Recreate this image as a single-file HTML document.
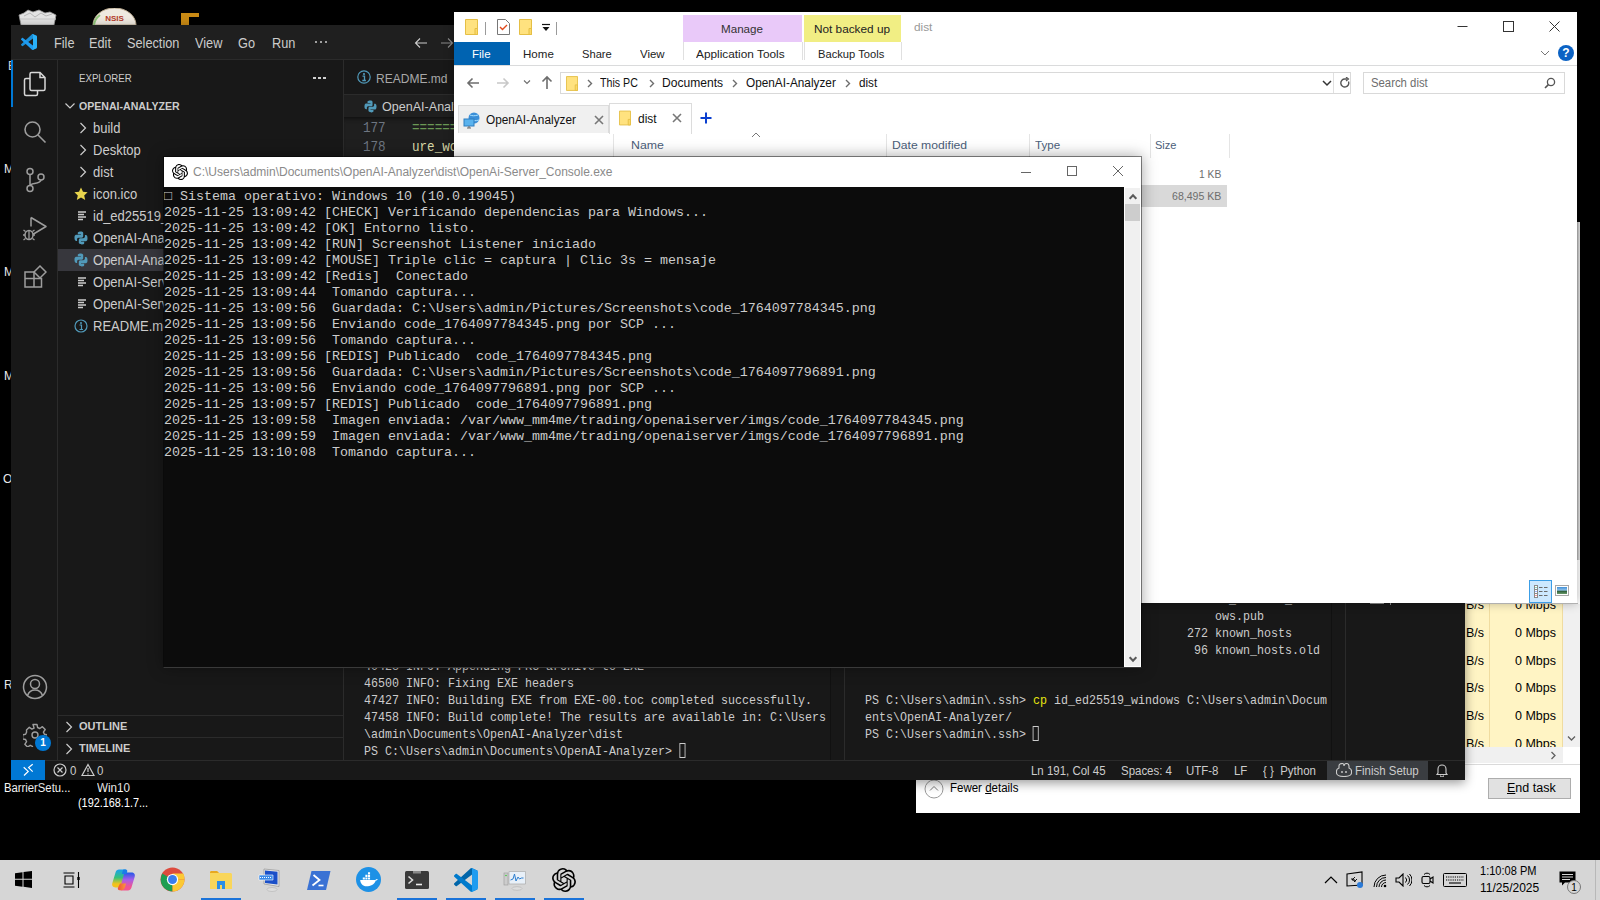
<!DOCTYPE html>
<html><head><meta charset="utf-8">
<style>
*{margin:0;padding:0;box-sizing:border-box}
html,body{width:1600px;height:900px;overflow:hidden;background:#000;font-family:"Liberation Sans",sans-serif}
.a{position:absolute}
.mono{font-family:"Liberation Mono",monospace}
.nw{white-space:nowrap}
/* VS Code */
#vs{left:11px;top:25px;width:1454px;height:755px;background:#181818;overflow:hidden;box-shadow:0 3px 10px rgba(0,0,0,.4)}
#vs .title{left:0;top:0;width:1454px;height:35px;background:#1f1f1f;border-bottom:1px solid #2b2b2b}
.menu{top:10px;font-size:14px;color:#cccccc;transform:scaleX(.91);transform-origin:0 0}
#vs .act{left:0;top:35px;width:47px;height:700px;background:#181818;border-right:1px solid #2b2b2b}
#vs .side{left:47px;top:35px;width:286px;height:700px;background:#181818;border-right:1px solid #2b2b2b}
.tree{font-size:14px;color:#cccccc;white-space:nowrap;transform:scaleX(.93);transform-origin:0 0}
#vs .status{left:0;top:735px;width:1454px;height:20px;background:#181818;border-top:1px solid #2b2b2b}
/* console */
#con{left:163px;top:156px;width:979px;height:512px;background:#fff;background-clip:padding-box;border:1px solid rgba(0,0,0,.45);border-bottom-color:#3a3a3a;box-shadow:0 0 14px rgba(0,0,0,.35)}
#con .body{left:0;top:30px;width:960px;height:480px;background:#0c0c0c;overflow:hidden}
#con pre{font-family:"Liberation Mono",monospace;font-size:13.33px;line-height:16px;color:#cccccc;position:absolute;left:0;top:2px;letter-spacing:0px}
/* explorer */
#ex{left:454px;top:12px;width:1123px;height:591px;background:#fff;box-shadow:0 0 10px rgba(0,0,0,.3)}
.seg{font-size:12.5px;color:#1e1e1e}
/* taskbar */
#tb{left:0;top:860px;width:1600px;height:40px;background:#d6d6d6}

.tmono{font-family:"Liberation Mono",monospace;font-size:13.5px;line-height:17px;color:#cccccc;transform:scaleX(.8642);transform-origin:0 0}
.cur{display:inline-block;width:7px;height:15px;border:1px solid #cccccc;vertical-align:-3px}
.sb{top:739px;font-size:12px;color:#cccccc;transform:scaleX(.955);transform-origin:0 0}
</style></head><body>

<!-- desktop icon fragments -->
<svg class="a" style="left:18px;top:8px" width="40" height="17" viewBox="0 0 40 17"><path d="M1 7l5-2 4-3 5 2 6-2 6 3 5-1 6 3-2 10H3z" fill="#e2e2e2" stroke="#9a9a9a" stroke-width=".8"/><path d="M6 8l6-3 5 4 6-4 5 3 6-2" stroke="#b5b5b5" stroke-width="1" fill="none"/><path d="M2 11h36" stroke="#c8c8c8" stroke-width="1"/></svg>
<svg class="a" style="left:92px;top:8px" width="45" height="17" viewBox="0 0 45 17"><path d="M1 17A21.5 17 0 0 1 44 17z" fill="#efe9e0" stroke="#b9a98f" stroke-width="1"/><path d="M2 17a21 16 0 0 1 6-10" stroke="#8fc47a" stroke-width="2" fill="none"/><text x="22.5" y="13" font-family="Liberation Sans" font-weight="bold" font-size="8" fill="#b33a2a" text-anchor="middle">NSIS</text></svg>
<svg class="a" style="left:181px;top:13px" width="19" height="12" viewBox="0 0 19 12"><path d="M0 0h18v4H8v8H0z" fill="#c98a14"/></svg>



<!-- task manager (behind VS Code) -->
<div class="a" style="left:1465px;top:603px;width:113px;height:1px;background:#b0b0b0;z-index:1"></div>
<div class="a" style="left:1577px;top:222px;width:3px;height:382px;background:linear-gradient(90deg,#a8a8a8,#d8d8d8 60%,#e8e8e8)"></div>

<div class="a" style="left:916px;top:560px;width:664px;height:253px;background:#fff">
  <div class="a" style="left:549px;top:44px;width:98px;height:143px;background:#fff4c4"></div>
  <div class="a" style="left:573px;top:44px;width:1px;height:143px;background:#f0dca0"></div>
  <div class="a" style="left:646px;top:44px;width:1px;height:143px;background:#f0dca0"></div>
  <div class="a" style="left:647px;top:44px;width:17px;height:143px;background:#f0f0f0"></div>
  <svg class="a" style="left:651px;top:175px" width="9" height="7" viewBox="0 0 9 7"><path d="M1 1.5l3.5 3.5L8 1.5" stroke="#606060" stroke-width="1.3" fill="none"/></svg>
  <div class="a" style="left:0;top:187px;width:647px;height:16px;background:#f0f0f0"></div>
  <svg class="a" style="left:634px;top:191px" width="7" height="9" viewBox="0 0 7 9"><path d="M1.5 1l3.5 3.5L1.5 8" stroke="#606060" stroke-width="1.3" fill="none"/></svg>
  <div class="a" style="left:0;top:204px;width:664px;height:1px;background:#dadada"></div>
  <div class="a" style="left:572px;top:218px;width:83px;height:21px;background:#e1e1e1;border:1px solid #adadad"></div>
  <div class="a nw" style="left:591px;top:221px;font-size:12.5px;color:#000"><u>E</u>nd task</div>
  <svg class="a" style="left:8px;top:219px" width="20" height="20" viewBox="0 0 20 20"><circle cx="10" cy="10" r="9" stroke="#9a9a9a" stroke-width="1" fill="none"/><path d="M6 11.5l4-4 4 4" stroke="#7a7a7a" stroke-width="1" fill="none"/></svg>
  <div class="a nw" style="left:34px;top:221px;font-size:12.5px;color:#000;transform:scaleX(.92);transform-origin:0 0">Fewer <u>d</u>etails</div>
<div class="a" style="left:549px;top:44px;width:98px;height:143px;overflow:hidden">
<div class="a nw" style="left:1px;top:-6.0px;font-size:12.5px;color:#000">B/s</div>
<div class="a nw" style="left:40px;top:-6.0px;width:51px;text-align:right;font-size:12.5px;color:#000">0 Mbps</div>
<div class="a nw" style="left:1px;top:21.8px;font-size:12.5px;color:#000">B/s</div>
<div class="a nw" style="left:40px;top:21.8px;width:51px;text-align:right;font-size:12.5px;color:#000">0 Mbps</div>
<div class="a nw" style="left:1px;top:49.5px;font-size:12.5px;color:#000">B/s</div>
<div class="a nw" style="left:40px;top:49.5px;width:51px;text-align:right;font-size:12.5px;color:#000">0 Mbps</div>
<div class="a nw" style="left:1px;top:77.2px;font-size:12.5px;color:#000">B/s</div>
<div class="a nw" style="left:40px;top:77.2px;width:51px;text-align:right;font-size:12.5px;color:#000">0 Mbps</div>
<div class="a nw" style="left:1px;top:105.0px;font-size:12.5px;color:#000">B/s</div>
<div class="a nw" style="left:40px;top:105.0px;width:51px;text-align:right;font-size:12.5px;color:#000">0 Mbps</div>
<div class="a nw" style="left:1px;top:132.8px;font-size:12.5px;color:#000">B/s</div>
<div class="a nw" style="left:40px;top:132.8px;width:51px;text-align:right;font-size:12.5px;color:#000">0 Mbps</div>
</div>
</div>

<div class="a nw" style="left:8px;top:59px;font-size:12px;color:#fff">E</div>
<div class="a nw" style="left:4px;top:162px;font-size:12px;color:#fff">M</div>
<div class="a nw" style="left:4px;top:265px;font-size:12px;color:#fff">M</div>
<div class="a nw" style="left:4px;top:369px;font-size:12px;color:#fff">M</div>
<div class="a nw" style="left:3px;top:472px;font-size:12px;color:#fff">O</div>
<div class="a nw" style="left:4px;top:678px;font-size:12px;color:#fff">R</div>
<div class="a nw" style="left:4px;top:781px;font-size:12px;color:#fff;transform:scaleX(.94);transform-origin:0 0">BarrierSetu...</div>
<div class="a nw" style="left:97px;top:781px;font-size:12px;color:#fff;transform:scaleX(.97);transform-origin:0 0">Win10</div>
<div class="a nw" style="left:78px;top:796px;font-size:12px;color:#fff;transform:scaleX(.905);transform-origin:0 0">(192.168.1.7...</div>

<div id="vs" class="a">
  <div class="a title"></div>
  <!-- logo -->
  <svg class="a" style="left:10px;top:9px" width="16" height="16" viewBox="0 0 100 100"><path d="M96.46 10.8L75.86.87c-2.38-1.15-5.24-.67-7.11 1.2L1.3 63.57c-1.82 1.66-1.82 4.53 0 6.19l5.51 5.01c1.49 1.36 3.72 1.46 5.32.25L93.36 13.4c2.72-2.07 6.64-.13 6.64 3.29v-.24c0-2.4-1.38-4.61-3.54-5.65z" fill="#1a8fd8"/><path d="M96.46 89.2l-20.6 9.93c-2.38 1.15-5.24.67-7.11-1.2L1.3 36.43c-1.82-1.66-1.82-4.53 0-6.19l5.51-5.01c1.49-1.36 3.72-1.46 5.32-.25L93.36 86.6c2.72 2.07 6.64.13 6.64-3.29v.24c0 2.4-1.38 4.61-3.54 5.65z" fill="#1f9cf0"/><path d="M75.86 99.13c-2.38 1.15-5.24.67-7.11-1.2 2.31 2.31 6.25.67 6.25-2.59V4.66c0-3.26-3.94-4.9-6.25-2.59 1.87-1.87 4.73-2.35 7.11-1.2l20.6 9.92c2.16 1.04 3.54 3.24 3.54 5.65v67.12c0 2.41-1.38 4.61-3.54 5.65z" fill="#29b0f8"/></svg>
  <div class="a menu" style="left:43px">File</div>
  <div class="a menu" style="left:78px">Edit</div>
  <div class="a menu" style="left:116px">Selection</div>
  <div class="a menu" style="left:184px">View</div>
  <div class="a menu" style="left:227px">Go</div>
  <div class="a menu" style="left:261px">Run</div>
  <div class="a" style="left:304px;top:16px;width:2px;height:2px;background:#a0a0a0;box-shadow:5px 0 #a0a0a0,10px 0 #a0a0a0"></div>
  <svg class="a" style="left:402px;top:10px" width="16" height="16" viewBox="0 0 16 16"><path d="M14 8H2.5M7 3.5L2.5 8 7 12.5" stroke="#cccccc" stroke-width="1.1" fill="none"/></svg>
  <svg class="a" style="left:428px;top:10px" width="16" height="16" viewBox="0 0 16 16"><path d="M2 8h11.5M9 3.5l4.5 4.5L9 12.5" stroke="#8a8a8a" stroke-width="1.1" fill="none"/></svg>

  <!-- activity bar -->
  <div class="a act"></div>
  <div class="a" style="left:0;top:35px;width:2px;height:47px;background:#0078d4"></div>
  <svg class="a" style="left:12px;top:46px" width="24" height="26" viewBox="0 0 24 26">
    <path d="M8.5 1.5h8.5l5 5v11.5c0 1 -.5 1.5 -1.5 1.5h-12c-1 0-1.5-.5-1.5-1.5v-15c0-1 .5-1.5 1.5-1.5z M17 1.5v5h5" stroke="#d7d7d7" stroke-width="1.5" fill="none"/>
    <path d="M7 7.5h-4c-1 0-1.5.5-1.5 1.5v14c0 1 .5 1.5 1.5 1.5h10c1 0 1.5-.5 1.5-1.5v-3" stroke="#d7d7d7" stroke-width="1.5" fill="none"/>
  </svg>
  <svg class="a" style="left:12px;top:95px" width="24" height="24" viewBox="0 0 24 24"><circle cx="9.5" cy="9.5" r="7.5" stroke="#9d9d9d" stroke-width="1.6" fill="none"/><path d="M15 15l7.5 7.5" stroke="#9d9d9d" stroke-width="1.6"/></svg>
  <svg class="a" style="left:12px;top:142px" width="24" height="26" viewBox="0 0 24 26"><circle cx="7" cy="4.5" r="3" stroke="#9d9d9d" stroke-width="1.5" fill="none"/><circle cx="7" cy="21.5" r="3" stroke="#9d9d9d" stroke-width="1.5" fill="none"/><circle cx="18" cy="10" r="3" stroke="#9d9d9d" stroke-width="1.5" fill="none"/><path d="M7 7.5v11M18 13c0 4-11 3-11 5.5" stroke="#9d9d9d" stroke-width="1.5" fill="none"/></svg>
  <svg class="a" style="left:11px;top:190px" width="26" height="26" viewBox="0 0 26 26"><path d="M9 2.5v9M9 2.5l15 9-15 9" stroke="#9d9d9d" stroke-width="1.5" fill="none" stroke-linejoin="round"/><ellipse cx="7" cy="20" rx="4" ry="4.5" stroke="#9d9d9d" stroke-width="1.5" fill="#181818"/><path d="M3 20H1M11 20h2M3.5 16.5l-2-1.5M10.5 16.5l2-1.5M3.5 23.5l-2 1.5M10.5 23.5l2 1.5M7 16v8" stroke="#9d9d9d" stroke-width="1.3"/></svg>
  <svg class="a" style="left:12px;top:240px" width="24" height="24" viewBox="0 0 24 24"><path d="M2 7h9v15H2zM2 13.5h16.5V22H11" stroke="#9d9d9d" stroke-width="1.5" fill="none"/><path d="M17 1l6 6-6 6-6-6z" stroke="#9d9d9d" stroke-width="1.5" fill="none"/></svg>
  <svg class="a" style="left:11px;top:649px" width="26" height="26" viewBox="0 0 26 26"><circle cx="13" cy="13" r="11.5" stroke="#9d9d9d" stroke-width="1.5" fill="none"/><circle cx="13" cy="10" r="4.5" stroke="#9d9d9d" stroke-width="1.5" fill="none"/><path d="M5.5 21.5c1.5-4 4-5.5 7.5-5.5s6 1.5 7.5 5.5" stroke="#9d9d9d" stroke-width="1.5" fill="none"/></svg>
  <svg class="a" style="left:12px;top:698px" width="24" height="24" viewBox="0 0 24 24"><path d="M10 1.5h4l.6 3 2.2 1 2.6-1.8 2.8 2.8-1.8 2.6 1 2.2 3 .6v4l-3 .6-1 2.2 1.8 2.6-2.8 2.8-2.6-1.8-2.2 1-.6 3h-4l-.6-3-2.2-1-2.6 1.8-2.8-2.8 1.8-2.6-1-2.2-3-.6v-4l3-.6 1-2.2L3.5 7.1l2.8-2.8 2.6 1.8 2.2-1z" stroke="#9d9d9d" stroke-width="1.4" fill="none" stroke-linejoin="round"/><circle cx="12" cy="12" r="3" stroke="#9d9d9d" stroke-width="1.4" fill="none"/></svg>
  <div class="a" style="left:24px;top:710px;width:16px;height:16px;border-radius:8px;background:#0078d4;color:#fff;font-size:10px;font-weight:bold;text-align:center;line-height:16px">1</div>

  <!-- sidebar -->
  <div class="a side"></div>
  <div class="a nw" style="left:68px;top:47px;font-size:11.5px;color:#cccccc;transform:scaleX(.84);transform-origin:0 0">EXPLORER</div>
  <div class="a" style="left:302px;top:52px;width:3px;height:2px;background:#d0d0d0;box-shadow:5px 0 #d0d0d0,10px 0 #d0d0d0"></div>
  <svg class="a" style="left:53px;top:75px" width="12" height="12" viewBox="0 0 12 12"><path d="M1.5 3.5L6 8l4.5-4.5" stroke="#cccccc" stroke-width="1.2" fill="none"/></svg>
  <div class="a nw" style="left:68px;top:75px;font-size:11.5px;font-weight:bold;color:#cccccc;transform:scaleX(.92);transform-origin:0 0">OPENAI-ANALYZER</div>
  <div class="a" style="left:47px;top:224px;width:285px;height:22px;background:#37373d"></div>
  <svg class="a" style="left:67px;top:97px" width="12" height="12" viewBox="0 0 12 12"><path d="M2.5 1L7.5 6l-5 5" stroke="#cccccc" stroke-width="1.2" fill="none"/></svg>
<div class="a tree" style="left:82px;top:95px">build</div>
<svg class="a" style="left:67px;top:119px" width="12" height="12" viewBox="0 0 12 12"><path d="M2.5 1L7.5 6l-5 5" stroke="#cccccc" stroke-width="1.2" fill="none"/></svg>
<div class="a tree" style="left:82px;top:117px">Desktop</div>
<svg class="a" style="left:67px;top:141px" width="12" height="12" viewBox="0 0 12 12"><path d="M2.5 1L7.5 6l-5 5" stroke="#cccccc" stroke-width="1.2" fill="none"/></svg>
<div class="a tree" style="left:82px;top:139px">dist</div>
<svg class="a" style="left:63px;top:162px" width="14" height="14" viewBox="0 0 14 14"><path d="M7 .5l2 4.3 4.6.5-3.4 3.1 1 4.6L7 10.6 2.8 13l1-4.6L.4 5.3 5 4.8z" fill="#e8d44d"/></svg>
<div class="a tree" style="left:82px;top:161px">icon.ico</div>
<svg class="a" style="left:66px;top:185px" width="12" height="12" viewBox="0 0 12 12"><path d="M1 2h8M1 4.5h6M1 7h8M1 9.5h5" stroke="#cccccc" stroke-width="1.3"/></svg>
<div class="a tree" style="left:82px;top:183px">id_ed25519_windows</div>
<svg class="a" style="left:63px;top:206px" width="14" height="14" viewBox="0 0 14 14"><path d="M6.8 .5c-3 0-3 1.3-3 1.3v1.5h3.2v.5H2.3S.5 3.6.5 6.8s1.6 3.1 1.6 3.1h1V8.4s-.1-1.6 1.6-1.6h3s1.5 0 1.5-1.5V2.1S9.4.5 6.8.5z" fill="#519aba"/><path d="M7.2 13.5c3 0 3-1.3 3-1.3v-1.5H7v-.5h4.7s1.8.2 1.8-3-1.6-3.1-1.6-3.1h-1v1.5s.1 1.6-1.6 1.6h-3s-1.5 0-1.5 1.5v2.7s-.2 1.6 2.4 1.6z" fill="#519aba"/></svg>
<div class="a tree" style="left:82px;top:205px">OpenAI-Analyzer.py</div>
<svg class="a" style="left:63px;top:228px" width="14" height="14" viewBox="0 0 14 14"><path d="M6.8 .5c-3 0-3 1.3-3 1.3v1.5h3.2v.5H2.3S.5 3.6.5 6.8s1.6 3.1 1.6 3.1h1V8.4s-.1-1.6 1.6-1.6h3s1.5 0 1.5-1.5V2.1S9.4.5 6.8.5z" fill="#519aba"/><path d="M7.2 13.5c3 0 3-1.3 3-1.3v-1.5H7v-.5h4.7s1.8.2 1.8-3-1.6-3.1-1.6-3.1h-1v1.5s.1 1.6-1.6 1.6h-3s-1.5 0-1.5 1.5v2.7s-.2 1.6 2.4 1.6z" fill="#519aba"/></svg>
<div class="a tree" style="left:82px;top:227px">OpenAI-Analyzer_console.py</div>
<svg class="a" style="left:66px;top:251px" width="12" height="12" viewBox="0 0 12 12"><path d="M1 2h8M1 4.5h6M1 7h8M1 9.5h5" stroke="#cccccc" stroke-width="1.3"/></svg>
<div class="a tree" style="left:82px;top:249px">OpenAI-Server.spec</div>
<svg class="a" style="left:66px;top:273px" width="12" height="12" viewBox="0 0 12 12"><path d="M1 2h8M1 4.5h6M1 7h8M1 9.5h5" stroke="#cccccc" stroke-width="1.3"/></svg>
<div class="a tree" style="left:82px;top:271px">OpenAI-Server_Console.spec</div>
<svg class="a" style="left:63px;top:294px" width="14" height="14" viewBox="0 0 14 14"><circle cx="7" cy="7" r="6" stroke="#519aba" stroke-width="1.2" fill="none"/><circle cx="7" cy="4" r="1" fill="#519aba"/><path d="M5.5 6h2v4.5M5.5 10.5h3.5" stroke="#519aba" stroke-width="1.2" fill="none"/></svg>
<div class="a tree" style="left:82px;top:293px">README.md</div>
  <!-- bottom panels -->
  <div class="a" style="left:47px;top:690px;width:285px;height:1px;background:#2b2b2b"></div>
  <div class="a" style="left:47px;top:712px;width:285px;height:1px;background:#2b2b2b"></div>
  <svg class="a" style="left:53px;top:696px" width="12" height="12" viewBox="0 0 12 12"><path d="M2.5 1L7.5 6l-5 5" stroke="#cccccc" stroke-width="1.2" fill="none"/></svg>
  <div class="a nw" style="left:68px;top:695px;font-size:11px;font-weight:bold;color:#cccccc">OUTLINE</div>
  <svg class="a" style="left:53px;top:718px" width="12" height="12" viewBox="0 0 12 12"><path d="M2.5 1L7.5 6l-5 5" stroke="#cccccc" stroke-width="1.2" fill="none"/></svg>
  <div class="a nw" style="left:68px;top:717px;font-size:11px;font-weight:bold;color:#cccccc">TIMELINE</div>

  <!-- editor -->

  <div class="a" style="left:333px;top:35px;width:1121px;height:35px;background:#181818;border-bottom:1px solid #2b2b2b"></div>
  <svg class="a" style="left:346px;top:45px" width="14" height="14" viewBox="0 0 14 14"><circle cx="7" cy="7" r="6.2" stroke="#519aba" stroke-width="1.2" fill="none"/><circle cx="7" cy="4" r="1.1" fill="#519aba"/><path d="M5.5 6.2h2v4.3M5.3 10.5h3.6" stroke="#519aba" stroke-width="1.3" fill="none"/></svg>
  <div class="a nw" style="left:365px;top:46px;font-size:13.5px;color:#a8a8a8;transform:scaleX(.89);transform-origin:0 0">README.md</div>
  <div class="a" style="left:333px;top:70px;width:1121px;height:23px;background:#1f1f1f"></div>
  <div class="a" style="left:333px;top:92px;width:1121px;height:600px;background:#1f1f1f;box-shadow:inset 0 5px 4px -3px #111"></div>
  <svg class="a" style="left:353px;top:75px" width="13" height="13" viewBox="0 0 14 14"><path d="M6.8 .5c-3 0-3 1.3-3 1.3v1.5h3.2v.5H2.3S.5 3.6.5 6.8s1.6 3.1 1.6 3.1h1V8.4s-.1-1.6 1.6-1.6h3s1.5 0 1.5-1.5V2.1S9.4.5 6.8.5z" fill="#519aba"/><path d="M7.2 13.5c3 0 3-1.3 3-1.3v-1.5H7v-.5h4.7s1.8.2 1.8-3-1.6-3.1-1.6-3.1h-1v1.5s.1 1.6-1.6 1.6h-3s-1.5 0-1.5 1.5v2.7s-.2 1.6 2.4 1.6z" fill="#519aba"/></svg>
  <div class="a nw" style="left:371px;top:74px;font-size:13.5px;color:#cccccc;transform:scaleX(.93);transform-origin:0 0">OpenAI-Analyzer_console.py</div>
  <div class="a nw mono" style="left:352px;top:94px;font-size:14px;line-height:19px;color:#6e7681;transform:scaleX(.9);transform-origin:0 0">177<br>178</div>
  <div class="a nw mono" style="left:401px;top:94px;font-size:14px;line-height:19px;color:#6a9955;transform:scaleX(.9);transform-origin:0 0">======<br><span style="color:#dcdcaa">ure_wo</span></div>
<div class="a" style="left:333px;top:560px;width:1121px;height:175px;background:#181818;border-top:1px solid #2b2b2b"></div>
<div class="a" style="left:819px;top:560px;width:1px;height:175px;background:#111"></div>
<div class="a" style="left:833px;top:560px;width:1px;height:175px;background:#2b2b2b"></div>
<div class="a" style="left:1320px;top:560px;width:1px;height:175px;background:#111"></div>
<div class="a" style="left:1334px;top:560px;width:1px;height:175px;background:#2b2b2b"></div>
<div class="a nw tmono" style="left:353px;top:633px">40428 INFO: Appending PKG archive to EXE<br>46500 INFO: Fixing EXE headers<br>47427 INFO: Building EXE from EXE-00.toc completed successfully.<br>47458 INFO: Build complete! The results are available in: C:\Users<br>\admin\Documents\OpenAI-Analyzer\dist<br>PS C:\Users\admin\Documents\OpenAI-Analyzer&gt; <span class="cur"></span></div>
<div class="a tmono" style="left:1162px;top:566px;white-space:pre">      id_ed25519_wind
      ows.pub
  272 known_hosts
   96 known_hosts.old</div>
<div class="a tmono" style="left:854px;top:667px;white-space:pre">PS C:\Users\admin\.ssh&gt; <span style="color:#e5e510">cp</span> id_ed25519_windows C:\Users\admin\Docum
ents\OpenAI-Analyzer/
PS C:\Users\admin\.ssh&gt; <span class="cur"></span></div>
<div class="a" style="left:1359px;top:573px;width:14px;height:6px;border:1px solid #8a8a8a;border-top:none"></div><div class="a" style="left:1379px;top:575px;width:1px;height:5px;background:#8a8a8a"></div>
<div class="a status"></div>
<div class="a" style="left:0;top:735px;width:34px;height:20px;background:#0078d4"></div>
<svg class="a" style="left:10px;top:738px" width="14" height="14" viewBox="0 0 14 14"><path d="M2.7 4.3L7.2 8.4 3 12.5M11.7 1.2L7.6 4.6l4.1 4.1" stroke="#fff" stroke-width="1.2" fill="none"/></svg>
<svg class="a" style="left:42px;top:738px" width="14" height="14" viewBox="0 0 14 14"><circle cx="7" cy="7" r="6" stroke="#cccccc" stroke-width="1.2" fill="none"/><path d="M4.5 4.5l5 5M9.5 4.5l-5 5" stroke="#cccccc" stroke-width="1.2"/></svg>
<div class="a nw sb" style="left:59px">0</div>
<svg class="a" style="left:70px;top:738px" width="14" height="14" viewBox="0 0 14 14"><path d="M7 1.5L13 12.5H1z" stroke="#cccccc" stroke-width="1.2" fill="none"/><path d="M7 5v4M7 10.5v1" stroke="#cccccc" stroke-width="1.2"/></svg>
<div class="a nw sb" style="left:86px">0</div>
<div class="a nw sb" style="left:1020px">Ln 191, Col 45</div>
<div class="a nw sb" style="left:1110px">Spaces: 4</div>
<div class="a nw sb" style="left:1175px">UTF-8</div>
<div class="a nw sb" style="left:1223px">LF</div>
<div class="a nw sb" style="left:1252px">{ }&nbsp; Python</div>
<div class="a" style="left:1316px;top:736px;width:101px;height:19px;background:#3a3d41"></div>
<svg class="a" style="left:1325px;top:738px" width="16" height="14" viewBox="0 0 16 14"><path d="M3 3c0-2 2-2.5 3.5-2.5S8 1.5 8 3c0-1.5 1-2.5 2.5-2.5S13 1 13 3v2c1.5.5 2.5 1.5 2.5 3v2c0 2-3 3.5-7.5 3.5S.5 12 .5 10V8C.5 6.5 1.5 5.5 3 5z" stroke="#cccccc" stroke-width="1.1" fill="none"/><path d="M6 8v2M10 8v2" stroke="#cccccc" stroke-width="1.4"/></svg>
<div class="a nw sb" style="left:1344px">Finish Setup</div>
<svg class="a" style="left:1424px;top:738px" width="14" height="14" viewBox="0 0 14 14"><path d="M3 10V6a4 4 0 0 1 8 0v4l1 1.5H2z M5.5 12.5a1.5 1.5 0 0 0 3 0" stroke="#cccccc" stroke-width="1.1" fill="none"/></svg>
</div>




<div id="ex" class="a">
<svg class="a" style="left:11px;top:7px" width="13" height="16" viewBox="0 0 13 16"><path d="M.5 .5h12v15H.5z" fill="#ffe27f" stroke="#e5bf45" stroke-width="1"/><path d="M10 9.5h2.5v6H10z" fill="#fbd96a" stroke="#e5bf45" stroke-width="1"/></svg>
  <div class="a" style="left:31px;top:10px;width:1px;height:13px;background:#9a9a9a"></div>
  <svg class="a" style="left:43px;top:7px" width="13" height="16" viewBox="0 0 13 16"><path d="M.5 .5h8l4 4v11H.5z" fill="#fff" stroke="#777" stroke-width="1"/><path d="M3 8l2.5 2.5L10 6" stroke="#e04a1c" stroke-width="1.4" fill="none"/></svg>
<svg class="a" style="left:65px;top:7px" width="13" height="16" viewBox="0 0 13 16"><path d="M.5 .5h12v15H.5z" fill="#ffe27f" stroke="#e5bf45" stroke-width="1"/><path d="M10 9.5h2.5v6H10z" fill="#fbd96a" stroke="#e5bf45" stroke-width="1"/></svg>
  <svg class="a" style="left:87px;top:11px" width="10" height="10" viewBox="0 0 10 10"><path d="M1 1.5h8" stroke="#111" stroke-width="1.2"/><path d="M1.5 4h7L5 8z" fill="#111"/></svg>
  <div class="a" style="left:102px;top:10px;width:1px;height:13px;background:#9a9a9a"></div>
  <div class="a" style="left:229px;top:3px;width:119px;height:27px;background:#e9c9f9"></div>
  <div class="a" style="left:350px;top:3px;width:97px;height:27px;background:#f1ee84"></div>
  <svg class="a" style="left:1003px;top:9px" width="12" height="12" viewBox="0 0 12 12"><path d="M.5 5.5h10" stroke="#333" stroke-width="1"/></svg>
  <svg class="a" style="left:1049px;top:9px" width="12" height="12" viewBox="0 0 12 12"><rect x=".5" y=".5" width="10" height="10" stroke="#333" stroke-width="1" fill="none"/></svg>
  <svg class="a" style="left:1095px;top:9px" width="12" height="12" viewBox="0 0 12 12"><path d="M.5 .5l10 10M10.5 .5l-10 10" stroke="#333" stroke-width="1"/></svg>
  <!-- ribbon tabs -->
  <div class="a" style="left:0;top:30px;width:56px;height:23px;background:#0063b1"></div>
  <div class="a" style="left:229px;top:30px;width:1px;height:18px;background:#e0e0e0"></div>
  <div class="a" style="left:348px;top:30px;width:1px;height:18px;background:#e0e0e0"></div>
  <div class="a" style="left:350px;top:30px;width:1px;height:18px;background:#e0e0e0"></div>
  <div class="a" style="left:447px;top:30px;width:1px;height:18px;background:#e0e0e0"></div>
  <svg class="a" style="left:1086px;top:37px" width="10" height="8" viewBox="0 0 10 8"><path d="M1 2l4 4 4-4" stroke="#777" stroke-width="1" fill="none"/></svg>
  <div class="a" style="left:1104px;top:33px;width:16px;height:16px;border-radius:8px;background:#0b62c4;color:#fff;font-size:12px;font-weight:bold;text-align:center;line-height:16px">?</div>
  <div class="a" style="left:0;top:53px;width:1123px;height:1px;background:#dadbdc"></div>
  <!-- nav -->
  <svg class="a" style="left:12px;top:64px" width="14" height="14" viewBox="0 0 14 14"><path d="M13 7H2M6.5 2.5L2 7l4.5 4.5" stroke="#6d6d6d" stroke-width="1.6" fill="none"/></svg>
  <svg class="a" style="left:42px;top:64px" width="14" height="14" viewBox="0 0 14 14"><path d="M1 7h11M7.5 2.5L12 7l-4.5 4.5" stroke="#c8c8c8" stroke-width="1.6" fill="none"/></svg>
  <svg class="a" style="left:69px;top:67px" width="8" height="6" viewBox="0 0 8 6"><path d="M1 1.5l3 3 3-3" stroke="#6d6d6d" stroke-width="1.1" fill="none"/></svg>
  <svg class="a" style="left:86px;top:63px" width="14" height="15" viewBox="0 0 14 15"><path d="M7 14V2M2.5 6.5L7 2l4.5 4.5" stroke="#6d6d6d" stroke-width="1.6" fill="none"/></svg>
  <div class="a" style="left:106px;top:60px;width:791px;height:22px;border:1px solid #d9d9d9"></div>
<svg class="a" style="left:112px;top:64px" width="12" height="15" viewBox="0 0 13 16"><path d="M.5 .5h12v15H.5z" fill="#ffe27f" stroke="#e5bf45" stroke-width="1"/><path d="M10 9.5h2.5v6H10z" fill="#fbd96a" stroke="#e5bf45" stroke-width="1"/></svg>
  <svg class="a" style="left:133px;top:67px" width="6" height="9" viewBox="0 0 6 9"><path d="M1 1l3.5 3.5L1 8" stroke="#6d6d6d" stroke-width="1.4" fill="none"/></svg>
  <svg class="a" style="left:195px;top:67px" width="6" height="9" viewBox="0 0 6 9"><path d="M1 1l3.5 3.5L1 8" stroke="#6d6d6d" stroke-width="1.4" fill="none"/></svg>
  <svg class="a" style="left:278px;top:67px" width="6" height="9" viewBox="0 0 6 9"><path d="M1 1l3.5 3.5L1 8" stroke="#6d6d6d" stroke-width="1.4" fill="none"/></svg>
  <svg class="a" style="left:391px;top:67px" width="6" height="9" viewBox="0 0 6 9"><path d="M1 1l3.5 3.5L1 8" stroke="#6d6d6d" stroke-width="1.4" fill="none"/></svg>
  <svg class="a" style="left:868px;top:67px" width="10" height="8" viewBox="0 0 10 8"><path d="M1 2l4 4 4-4" stroke="#333" stroke-width="1.5" fill="none"/></svg>
  <div class="a" style="left:879px;top:61px;width:1px;height:20px;background:#e0e0e0"></div>
  <svg class="a" style="left:885px;top:65px" width="12" height="12" viewBox="0 0 12 12"><path d="M9.5 4.5A4 4 0 1 1 6 2H8" stroke="#555" stroke-width="1.4" fill="none"/><path d="M7 0l2.5 2L7 4" stroke="#555" stroke-width="1.2" fill="none"/></svg>
  <div class="a" style="left:909px;top:60px;width:202px;height:22px;border:1px solid #d9d9d9"></div>
  <svg class="a" style="left:1090px;top:65px" width="12" height="12" viewBox="0 0 12 12"><circle cx="7" cy="5" r="3.6" stroke="#555" stroke-width="1.3" fill="none"/><path d="M4.4 7.6L1 11" stroke="#555" stroke-width="1.6"/></svg>
  <!-- tabs -->
  <div class="a" style="left:4px;top:93px;width:151px;height:28px;background:#f0f0f0;border:1px solid #dcdcdc;border-bottom:none"></div>
  <svg class="a" style="left:9px;top:100px" width="18" height="17" viewBox="0 0 18 17"><circle cx="11" cy="6" r="5.5" fill="#3b8fd8"/><path d="M7 3c2 1 5 1 8 0M6 8c3 1 7 1 10 0" stroke="#a8e0ff" stroke-width="1" fill="none"/><rect x="1" y="7" width="10" height="7" fill="#5bb3ee" stroke="#2f7fc0" stroke-width="1"/><path d="M4 16h4M6 14v2" stroke="#666" stroke-width="1"/></svg>
  <svg class="a" style="left:140px;top:103px" width="10" height="10" viewBox="0 0 10 10"><path d="M1 1l8 8M9 1L1 9" stroke="#777" stroke-width="1.6"/></svg>
  <div class="a" style="left:155px;top:91px;width:83px;height:31px;background:#fff;border:1px solid #dcdcdc;border-bottom:none"></div>
<svg class="a" style="left:165px;top:98px" width="12" height="16" viewBox="0 0 13 16"><path d="M.5 .5h12v15H.5z" fill="#ffe27f" stroke="#e5bf45" stroke-width="1"/><path d="M10 9.5h2.5v6H10z" fill="#fbd96a" stroke="#e5bf45" stroke-width="1"/></svg>
  <svg class="a" style="left:218px;top:101px" width="10" height="10" viewBox="0 0 10 10"><path d="M1 1l8 8M9 1L1 9" stroke="#777" stroke-width="1.6"/></svg>
  <svg class="a" style="left:246px;top:100px" width="12" height="12" viewBox="0 0 12 12"><path d="M6 .5v11M.5 6h11" stroke="#0a3fd0" stroke-width="2"/></svg>
  <!-- headers -->
  <div class="a" style="left:0;top:122px;width:1123px;height:24px;background:#fff"></div>
  <svg class="a" style="left:297px;top:119px" width="10" height="7" viewBox="0 0 10 7"><path d="M1 6l4-4 4 4" stroke="#777" stroke-width="1" fill="none"/></svg>
  <div class="a" style="left:159px;top:122px;width:1px;height:24px;background:#e5e5e5"></div>
  <div class="a" style="left:432px;top:122px;width:1px;height:24px;background:#e5e5e5"></div>
  <div class="a" style="left:575px;top:122px;width:1px;height:24px;background:#e5e5e5"></div>
  <div class="a" style="left:696px;top:122px;width:1px;height:24px;background:#e5e5e5"></div>
  <div class="a" style="left:775px;top:122px;width:1px;height:24px;background:#e5e5e5"></div>
  <div class="a" style="left:600px;top:173px;width:173px;height:22px;background:#d9d9d9"></div>
  <div class="a nw" style="left:266.6px;top:11px;font-size:11.5px;color:#333;transform:scaleX(1.011);transform-origin:0 0">Manage</div>
  <div class="a nw" style="left:359.7px;top:11px;font-size:11.5px;color:#222;transform:scaleX(1.025);transform-origin:0 0">Not backed up</div>
  <div class="a nw" style="left:459.5px;top:9px;font-size:11.5px;color:#999;transform:scaleX(1.028);transform-origin:0 0">dist</div>
  <div class="a nw" style="left:18.4px;top:36px;font-size:11.5px;color:#fff;transform:scaleX(1.004);transform-origin:0 0">File</div>
  <div class="a nw" style="left:69.0px;top:36px;font-size:11.5px;color:#222;transform:scaleX(1.004);transform-origin:0 0">Home</div>
  <div class="a nw" style="left:128.0px;top:36px;font-size:11.5px;color:#222;transform:scaleX(0.970);transform-origin:0 0">Share</div>
  <div class="a nw" style="left:186.4px;top:36px;font-size:11.5px;color:#222;transform:scaleX(0.995);transform-origin:0 0">View</div>
  <div class="a nw" style="left:242.3px;top:36px;font-size:11.5px;color:#222;transform:scaleX(1.029);transform-origin:0 0">Application Tools</div>
  <div class="a nw" style="left:363.5px;top:36px;font-size:11.5px;color:#222;transform:scaleX(0.971);transform-origin:0 0">Backup Tools</div>
  <div class="a nw" style="left:146.1px;top:64px;font-size:12px;color:#111;transform:scaleX(0.886);transform-origin:0 0">This PC</div>
  <div class="a nw" style="left:207.6px;top:64px;font-size:12px;color:#111;transform:scaleX(1.007);transform-origin:0 0">Documents</div>
  <div class="a nw" style="left:291.6px;top:64px;font-size:12px;color:#111;transform:scaleX(0.983);transform-origin:0 0">OpenAI-Analyzer</div>
  <div class="a nw" style="left:404.7px;top:64px;font-size:12px;color:#111;transform:scaleX(0.976);transform-origin:0 0">dist</div>
  <div class="a nw" style="left:917.4px;top:64px;font-size:12px;color:#6d6d6d;transform:scaleX(0.945);transform-origin:0 0">Search dist</div>
  <div class="a nw" style="left:31.7px;top:101px;font-size:12.5px;color:#111;transform:scaleX(0.945);transform-origin:0 0">OpenAI-Analyzer</div>
  <div class="a nw" style="left:183.6px;top:100px;font-size:12.5px;color:#111;transform:scaleX(0.954);transform-origin:0 0">dist</div>
  <div class="a nw" style="left:176.5px;top:127px;font-size:11.5px;color:#4c607a;transform:scaleX(1.072);transform-origin:0 0">Name</div>
  <div class="a nw" style="left:437.5px;top:127px;font-size:11.5px;color:#4c607a;transform:scaleX(1.059);transform-origin:0 0">Date modified</div>
  <div class="a nw" style="left:581.0px;top:127px;font-size:11.5px;color:#4c607a;transform:scaleX(1.007);transform-origin:0 0">Type</div>
  <div class="a nw" style="left:700.6px;top:127px;font-size:11.5px;color:#4c607a;transform:scaleX(0.959);transform-origin:0 0">Size</div>
  <div class="a nw" style="left:744.6px;top:156px;font-size:11.5px;color:#6d6d6d;transform:scaleX(0.896);transform-origin:0 0">1 KB</div>
  <div class="a nw" style="left:717.6px;top:178px;font-size:11.5px;color:#6d6d6d;transform:scaleX(0.919);transform-origin:0 0">68,495 KB</div>
  <!-- view toggles -->
  <div class="a" style="left:1075px;top:568px;width:23px;height:23px;background:#cce8ff;border:1px solid #3c9ee6"></div>
  <svg class="a" style="left:1079px;top:572px" width="17" height="15" viewBox="0 0 17 15"><rect x="1.5" y="1.5" width="3" height="12" stroke="#8a8a8a" fill="#fff" stroke-width="1"/><path d="M1.5 5.5h3M1.5 9.5h3" stroke="#8a8a8a" stroke-width="1"/><rect x="2.5" y="3" width="1" height="1" fill="#2a7"/><rect x="2.5" y="7" width="1" height="1" fill="#36f"/><rect x="2.5" y="11" width="1" height="1" fill="#e33"/><path d="M6 3.5h3.5M11 3.5h3.5M6 7.5h3.5M11 7.5h3.5M6 11.5h3.5M11 11.5h3.5" stroke="#6a6a6a" stroke-width="1"/></svg>
  <div class="a" style="left:1101px;top:573px;width:14px;height:11px;border:1px solid #a8a8a8;background:#fff;padding:1px"><div style="width:100%;height:100%;background:linear-gradient(#3f8fd8 0%,#8fc0e8 45%,#2d5f3a 60%,#6a9a6a 100%)"></div></div>
</div>

<div id="con" class="a">
  <svg class="a" style="left:8px;top:7px" width="16" height="16" viewBox="0 0 24 24"><path d="M22.28 9.82a5.98 5.98 0 0 0-.52-4.91 6.05 6.05 0 0 0-6.51-2.9A6.07 6.07 0 0 0 4.98 4.18a5.98 5.98 0 0 0-4 2.9 6.05 6.05 0 0 0 .74 7.1 5.98 5.98 0 0 0 .51 4.91 6.05 6.05 0 0 0 6.51 2.9A5.98 5.98 0 0 0 13.26 24a6.06 6.06 0 0 0 5.77-4.21 5.99 5.99 0 0 0 4-2.9 6.06 6.06 0 0 0-.75-7.07zM13.26 22.43a4.48 4.48 0 0 1-2.88-1.04l.14-.08 4.78-2.76a.8.8 0 0 0 .39-.68v-6.74l2.02 1.17a.07.07 0 0 1 .04.05v5.58a4.5 4.5 0 0 1-4.49 4.5zM3.6 18.3a4.47 4.47 0 0 1-.53-3.01l.14.08 4.78 2.76a.77.77 0 0 0 .78 0l5.84-3.37v2.33a.08.08 0 0 1-.03.06L9.74 19.95a4.5 4.5 0 0 1-6.14-1.65zM2.34 7.9a4.49 4.49 0 0 1 2.37-1.97V11.6a.77.77 0 0 0 .39.68l5.81 3.35-2.02 1.17a.08.08 0 0 1-.07 0l-4.83-2.79A4.5 4.5 0 0 1 2.34 7.87zm16.6 3.86L13.1 8.36l2.02-1.16a.08.08 0 0 1 .07 0l4.83 2.79a4.49 4.49 0 0 1-.68 8.1v-5.68a.79.79 0 0 0-.41-.67zm2.01-3.02l-.14-.09-4.77-2.78a.78.78 0 0 0-.79 0L9.41 9.23V6.9a.07.07 0 0 1 .03-.06l4.83-2.79a4.5 4.5 0 0 1 6.68 4.66zM8.31 12.86L6.29 11.7a.08.08 0 0 1-.04-.06V6.08a4.5 4.5 0 0 1 7.38-3.45l-.14.08-4.78 2.76a.8.8 0 0 0-.39.68zm1.1-2.37l2.6-1.5 2.6 1.5v3l-2.6 1.5-2.6-1.5z" fill="#000"/></svg>
  <div class="a nw" style="left:29px;top:8px;font-size:12.5px;color:#8a8a8a;transform:scaleX(.96);transform-origin:0 0">C:\Users\admin\Documents\OpenAI-Analyzer\dist\OpenAi-Server_Console.exe</div>
  <svg class="a" style="left:856px;top:9px" width="12" height="12" viewBox="0 0 12 12"><path d="M1 6.5h10" stroke="#666" stroke-width="1"/></svg>
  <svg class="a" style="left:902px;top:8px" width="12" height="12" viewBox="0 0 12 12"><rect x="1.5" y="1.5" width="9" height="9" stroke="#666" stroke-width="1" fill="none"/></svg>
  <svg class="a" style="left:948px;top:8px" width="12" height="12" viewBox="0 0 12 12"><path d="M1 1l10 10M11 1L1 11" stroke="#666" stroke-width="1"/></svg>
  <div class="a body"><pre>□ Sistema operativo: Windows 10 (10.0.19045)
2025-11-25 13:09:42 [CHECK] Verificando dependencias para Windows...
2025-11-25 13:09:42 [OK] Entorno listo.
2025-11-25 13:09:42 [RUN] Screenshot Listener iniciado
2025-11-25 13:09:42 [MOUSE] Triple clic = captura | Clic 3s = mensaje
2025-11-25 13:09:42 [Redis]  Conectado
2025-11-25 13:09:44  Tomando captura...
2025-11-25 13:09:56  Guardada: C:\Users\admin/Pictures/Screenshots\code_1764097784345.png
2025-11-25 13:09:56  Enviando code_1764097784345.png por SCP ...
2025-11-25 13:09:56  Tomando captura...
2025-11-25 13:09:56 [REDIS] Publicado  code_1764097784345.png
2025-11-25 13:09:56  Guardada: C:\Users\admin/Pictures/Screenshots\code_1764097796891.png
2025-11-25 13:09:56  Enviando code_1764097796891.png por SCP ...
2025-11-25 13:09:57 [REDIS] Publicado  code_1764097796891.png
2025-11-25 13:09:58  Imagen enviada: /var/www_mm4me/trading/openaiserver/imgs/code_1764097784345.png
2025-11-25 13:09:59  Imagen enviada: /var/www_mm4me/trading/openaiserver/imgs/code_1764097796891.png
2025-11-25 13:10:08  Tomando captura...</pre></div>
  <div class="a" style="left:960px;top:30px;width:17px;height:480px;background:#f0f0f0;border:1px solid #fff"></div>
  <svg class="a" style="left:965px;top:36px" width="8" height="7" viewBox="0 0 8 7"><path d="M.7 5.8L4 2.3l3.3 3.5" stroke="#5a5a5a" stroke-width="2" fill="none"/></svg>
  <div class="a" style="left:961px;top:47px;width:15px;height:17px;background:#cdcdcd"></div>
  <svg class="a" style="left:965px;top:499px" width="8" height="7" viewBox="0 0 8 7"><path d="M.7 1.2L4 4.7l3.3-3.5" stroke="#5a5a5a" stroke-width="2" fill="none"/></svg>
</div>

<div id="tb" class="a">
  <svg class="a" style="left:15px;top:11px" width="18" height="17" viewBox="0 0 18 17"><path d="M0 2.3L7.5 1.2v6.6H0zM8.5 1.1L17 0v7.8H8.5zM0 8.8h7.5v6.9L0 14.7zM8.5 8.8H17V17l-8.5-1.2z" fill="#000"/></svg>
  <svg class="a" style="left:63px;top:12px" width="18" height="16" viewBox="0 0 18 16"><path d="M.5 1h11M.5 15h11M2 4h8v8H2z" stroke="#000" stroke-width="1.1" fill="none"/><path d="M15.5 0v16" stroke="#000" stroke-width="1.1"/><rect x="14.3" y="5" width="2.4" height="3" fill="#000"/></svg>
  <svg class="a" style="left:111px;top:8px" width="25" height="24" viewBox="0 0 25 24"><defs><linearGradient id="cgA" x1="0" y1="0" x2="0" y2="1"><stop offset="0" stop-color="#1aa0f0"/><stop offset=".45" stop-color="#36c27a"/><stop offset=".8" stop-color="#f3c21c"/></linearGradient><linearGradient id="cgB" x1="0" y1="0" x2="0" y2="1"><stop offset="0" stop-color="#2058e8"/><stop offset=".4" stop-color="#a65ee8"/><stop offset=".8" stop-color="#f2548f"/></linearGradient><linearGradient id="cgC" x1="0" y1="0" x2="1" y2="0"><stop offset="0" stop-color="#f24f3a"/><stop offset="1" stop-color="#f79a3a"/></linearGradient></defs>
<path d="M8 1.5h6.5c1.3 0 2 1 1.6 2.2L11 19.5H4.5C2 19.5 .6 17.6 1.3 15.3L4.6 4.2C5.1 2.6 6.4 1.5 8 1.5z" fill="url(#cgA)"/>
<path d="M13.5 4.5h7c2.5 0 3.9 1.9 3.2 4.2l-3.3 11.1c-.5 1.6-1.8 2.7-3.4 2.7H10.5c-1.3 0-2-1-1.6-2.2z" fill="url(#cgB)"/>
<path d="M9 15.5h6l-1.2 4c-.5 1.6-1.8 2.7-3.4 2.7H8.5c-1.3 0-2-1-1.6-2.2z" fill="url(#cgC)"/>
<path d="M12.5 1.5h2c1.3 0 2 1 1.6 2.2l-.7 2.2h-4.5l.4-1.2c.3-1.9 1-3.2 1.2-3.2z" fill="#1b7ce8"/></svg>
  <svg class="a" style="left:160px;top:7px" width="25" height="25" viewBox="0 0 24 24"><circle cx="12" cy="12" r="11.5" fill="#dd4b3e"/><path d="M12 12L2.2 6.3A11.5 11.5 0 0 0 12 23.5z" fill="#1e9e52"/><path d="M12 12h11.5A11.5 11.5 0 0 1 12 23.5z" fill="#fcc934"/><path d="M12 6.3h10.5a11.5 11.5 0 0 1 1 5.7H12z" fill="#fcc934"/><circle cx="12" cy="12" r="5.4" fill="#fff"/><circle cx="12" cy="12" r="4.3" fill="#3b7ded"/></svg>
  <svg class="a" style="left:210px;top:11px" width="22" height="18" viewBox="0 0 22 18"><path d="M0 1.5C0 .7.7 0 1.5 0H7l2 2h11.5c.8 0 1.5.7 1.5 1.5V18H0z" fill="#f9d65a"/><path d="M0 1.5C0 .7.7 0 1.5 0H7l2 2H0z" fill="#e8a820"/><path d="M7 10h8v8h-3v-4h-2v4H7z" fill="#2c8ee6"/></svg>
  <svg class="a" style="left:258px;top:8px" width="24" height="24" viewBox="0 0 24 24"><path d="M6 1l15 1.5v16L6 16z" fill="#e6e6e6" stroke="#888" stroke-width=".6"/><path d="M7 2.5l12.5 1.3v12.8L7 15z" fill="#1a4fc8"/><path d="M1 7h14v5H1z" fill="#3b8ae8" stroke="#fff" stroke-width=".6"/><path d="M2 9.5h12" stroke="#fff" stroke-width="1" stroke-dasharray="1 1"/><ellipse cx="14" cy="21.5" rx="5" ry="2" fill="#ddd" stroke="#aaa" stroke-width=".5"/></svg>
  <svg class="a" style="left:307px;top:11px" width="24" height="19" viewBox="0 0 24 19"><path d="M4.5 0h19L19 19H0z" fill="#3a72d4"/><path d="M6.5 4l6 5-7 5.5" stroke="#fff" stroke-width="1.8" fill="none"/><path d="M11.5 14.5h5" stroke="#fff" stroke-width="1.6"/></svg>
  <svg class="a" style="left:356px;top:7px" width="25" height="25" viewBox="0 0 24 24"><circle cx="12" cy="12" r="12" fill="#1d91e6"/><path d="M4 12.5h14.5c.8-.8 1.6-1 2.3-.8-.3.7-1 1.2-1.8 1.3C17.5 17 14 18.5 10 18.5 6.5 18.5 4.3 16 4 12.5z" fill="#fff"/><path d="M6.5 10h2v2h-2zM9 10h2v2H9zM11.5 10h2v2h-2zM9 7.5h2v2H9zM11.5 7.5h2v2h-2zM11.5 5h2v2h-2z" fill="#fff"/></svg>
  <svg class="a" style="left:405px;top:11px" width="24" height="18" viewBox="0 0 24 18"><rect x="0" y="0" width="24" height="18" rx="1.5" fill="#3a3a3a"/><rect x="8" y="0" width="8" height="2.5" fill="#8a8a8a"/><path d="M3.5 5.5l4 3.5-4 3.5" stroke="#ddd" stroke-width="1.6" fill="none"/><path d="M11 13.5h6" stroke="#eee" stroke-width="1.6"/></svg>
  <svg class="a" style="left:454px;top:8px" width="24" height="24" viewBox="0 0 100 100"><path d="M96.46 10.8L75.86.87c-2.38-1.15-5.24-.67-7.11 1.2L1.3 63.57c-1.82 1.66-1.82 4.53 0 6.19l5.51 5.01c1.49 1.36 3.72 1.46 5.32.25L93.36 13.4c2.72-2.07 6.64-.13 6.64 3.29v-.24c0-2.4-1.38-4.61-3.54-5.65z" fill="#0065a9"/><path d="M96.46 89.2l-20.6 9.93c-2.38 1.15-5.24.67-7.11-1.2L1.3 36.43c-1.82-1.66-1.82-4.53 0-6.19l5.51-5.01c1.49-1.36 3.72-1.46 5.32-.25L93.36 86.6c2.72 2.07 6.64.13 6.64-3.29v.24c0 2.4-1.38 4.61-3.54 5.65z" fill="#007acc"/><path d="M75.86 99.13c-2.38 1.15-5.24.67-7.11-1.2 2.31 2.31 6.25.67 6.25-2.59V4.66c0-3.26-3.94-4.9-6.25-2.59 1.87-1.87 4.73-2.35 7.11-1.2l20.6 9.92c2.16 1.04 3.54 3.24 3.54 5.65v67.12c0 2.41-1.38 4.61-3.54 5.65z" fill="#1f9cf0"/></svg>
  <svg class="a" style="left:503px;top:11px" width="24" height="20" viewBox="0 0 24 20"><rect x="1" y="2" width="4" height="12" fill="#ccc" stroke="#999" stroke-width=".6"/><circle cx="3" cy="4.5" r=".8" fill="#3c3"/><path d="M6 .5h16.5v12.5H6z" fill="#e8f0f8" stroke="#aaa" stroke-width=".7"/><path d="M7.5 9l2.5-1 1.5-5 1.5 7 2-4 1.5 2 2-1h2" stroke="#2d7fd0" stroke-width="1" fill="none"/><ellipse cx="14" cy="17.5" rx="5" ry="1.8" fill="#ddd" stroke="#aaa" stroke-width=".5"/></svg>
  <svg class="a" style="left:552px;top:8px" width="24" height="24" viewBox="0 0 24 24"><path d="M22.28 9.82a5.98 5.98 0 0 0-.52-4.91 6.05 6.05 0 0 0-6.51-2.9A6.07 6.07 0 0 0 4.98 4.18a5.98 5.98 0 0 0-4 2.9 6.05 6.05 0 0 0 .74 7.1 5.98 5.98 0 0 0 .51 4.91 6.05 6.05 0 0 0 6.51 2.9A5.98 5.98 0 0 0 13.26 24a6.06 6.06 0 0 0 5.77-4.21 5.99 5.99 0 0 0 4-2.9 6.06 6.06 0 0 0-.75-7.07zM13.26 22.43a4.48 4.48 0 0 1-2.88-1.04l.14-.08 4.78-2.76a.8.8 0 0 0 .39-.68v-6.74l2.02 1.17a.07.07 0 0 1 .04.05v5.58a4.5 4.5 0 0 1-4.49 4.5zM3.6 18.3a4.47 4.47 0 0 1-.53-3.01l.14.08 4.78 2.76a.77.77 0 0 0 .78 0l5.84-3.37v2.33a.08.08 0 0 1-.03.06L9.74 19.95a4.5 4.5 0 0 1-6.14-1.65zM2.34 7.9a4.49 4.49 0 0 1 2.37-1.97V11.6a.77.77 0 0 0 .39.68l5.81 3.35-2.02 1.17a.08.08 0 0 1-.07 0l-4.83-2.79A4.5 4.5 0 0 1 2.34 7.87zm16.6 3.86L13.1 8.36l2.02-1.16a.08.08 0 0 1 .07 0l4.83 2.79a4.49 4.49 0 0 1-.68 8.1v-5.680a.79.79 0 0 0-.41-.67zm2.01-3.02l-.14-.09-4.77-2.78a.78.78 0 0 0-.79 0L9.41 9.23V6.9a.07.07 0 0 1 .03-.06l4.83-2.79a4.5 4.5 0 0 1 6.68 4.66zM8.31 12.86L6.29 11.7a.08.08 0 0 1-.04-.06V6.08a4.5 4.5 0 0 1 7.38-3.45l-.14.08-4.78 2.76a.8.8 0 0 0-.39.68zm1.1-2.37l2.6-1.5 2.6 1.5v3l-2.6 1.5-2.6-1.5z" fill="#000"/></svg>
  <div class="a" style="left:201px;top:38px;width:40px;height:2px;background:#1a73d9"></div>
  <div class="a" style="left:397px;top:38px;width:40px;height:2px;background:#1a73d9"></div>
  <div class="a" style="left:446px;top:38px;width:40px;height:2px;background:#1a73d9"></div>
  <div class="a" style="left:495px;top:38px;width:40px;height:2px;background:#1a73d9"></div>
  <div class="a" style="left:544px;top:38px;width:40px;height:2px;background:#1a73d9"></div>
  <!-- tray -->
  <svg class="a" style="left:1324px;top:15px" width="14" height="9" viewBox="0 0 14 9"><path d="M1 8l6-6 6 6" stroke="#000" stroke-width="1.2" fill="none"/></svg>
  <svg class="a" style="left:1346px;top:11px" width="19" height="18" viewBox="0 0 19 18"><path d="M1 3l15-2v13L1 15z" stroke="#000" stroke-width="1.1" fill="none"/><path d="M6 9l3-3M5 8h2v2M8 11l3-3M10 10h-2v-2" stroke="#000" stroke-width=".9" fill="none"/><circle cx="14" cy="14" r="3" fill="#2a7ad8"/></svg>
  <svg class="a" style="left:1373px;top:14px" width="15" height="14" viewBox="0 0 15 14"><path d="M1 13A12 12 0 0 1 13 1M3.5 13A9.5 9.5 0 0 1 13 3.5M6 13A7 7 0 0 1 13 6M8.5 13A4.5 4.5 0 0 1 13 8.5" stroke="#000" stroke-width="1" fill="none"/><circle cx="12" cy="12" r="1.3" fill="#000"/></svg>
  <svg class="a" style="left:1395px;top:13px" width="17" height="14" viewBox="0 0 17 14"><path d="M1 5h3l4-4v12L4 9H1z" stroke="#000" stroke-width="1.1" fill="none"/><path d="M10.5 4.5a3.5 3.5 0 0 1 0 5M12.5 2.5a6 6 0 0 1 0 9M14.5 1a8.5 8.5 0 0 1 0 12" stroke="#000" stroke-width="1" fill="none"/></svg>
  <svg class="a" style="left:1421px;top:11px" width="13" height="18" viewBox="0 0 13 18"><path d="M3 3.5A4 4 0 0 1 9 3.5M3 14.5A4 4 0 0 0 9 14.5" stroke="#000" stroke-width="1" fill="none"/><rect x="1" y="5.5" width="8" height="7" rx="1.5" stroke="#000" stroke-width="1.1" fill="none"/><path d="M9 8l3-2v6l-3-2" stroke="#000" stroke-width="1.1" fill="none"/></svg>
  <svg class="a" style="left:1443px;top:13px" width="24" height="14" viewBox="0 0 24 14"><rect x=".5" y=".5" width="23" height="13" rx="1" stroke="#000" stroke-width="1" fill="none"/><path d="M3 4h18M3 7h18" stroke="#000" stroke-width="1.1" stroke-dasharray="1.2 1"/><path d="M6 10h12" stroke="#000" stroke-width="1.1"/></svg>
  <div class="a nw" style="left:1480px;top:4px;font-size:12px;color:#000;transform:scaleX(.92);transform-origin:0 0">1:10:08 PM</div>
  <div class="a nw" style="left:1480px;top:21px;font-size:12px;color:#000">11/25/2025</div>
  <svg class="a" style="left:1559px;top:11px" width="26" height="26" viewBox="0 0 26 26"><path d="M.5 .5h16v11H6l-3 3v-3H.5z" fill="#000"/><path d="M3 3.5h11M3 6h11M3 8.5h8" stroke="#d6d6d6" stroke-width="1"/><circle cx="15" cy="16" r="6.5" fill="#d6d6d6" stroke="#777" stroke-width="1"/><text x="15" y="20" font-size="10" text-anchor="middle" font-family="Liberation Sans" fill="#000">1</text></svg>
  <div class="a" style="left:1595px;top:0;width:1px;height:40px;background:#b8b8b8"></div>
</div>
</body></html>
